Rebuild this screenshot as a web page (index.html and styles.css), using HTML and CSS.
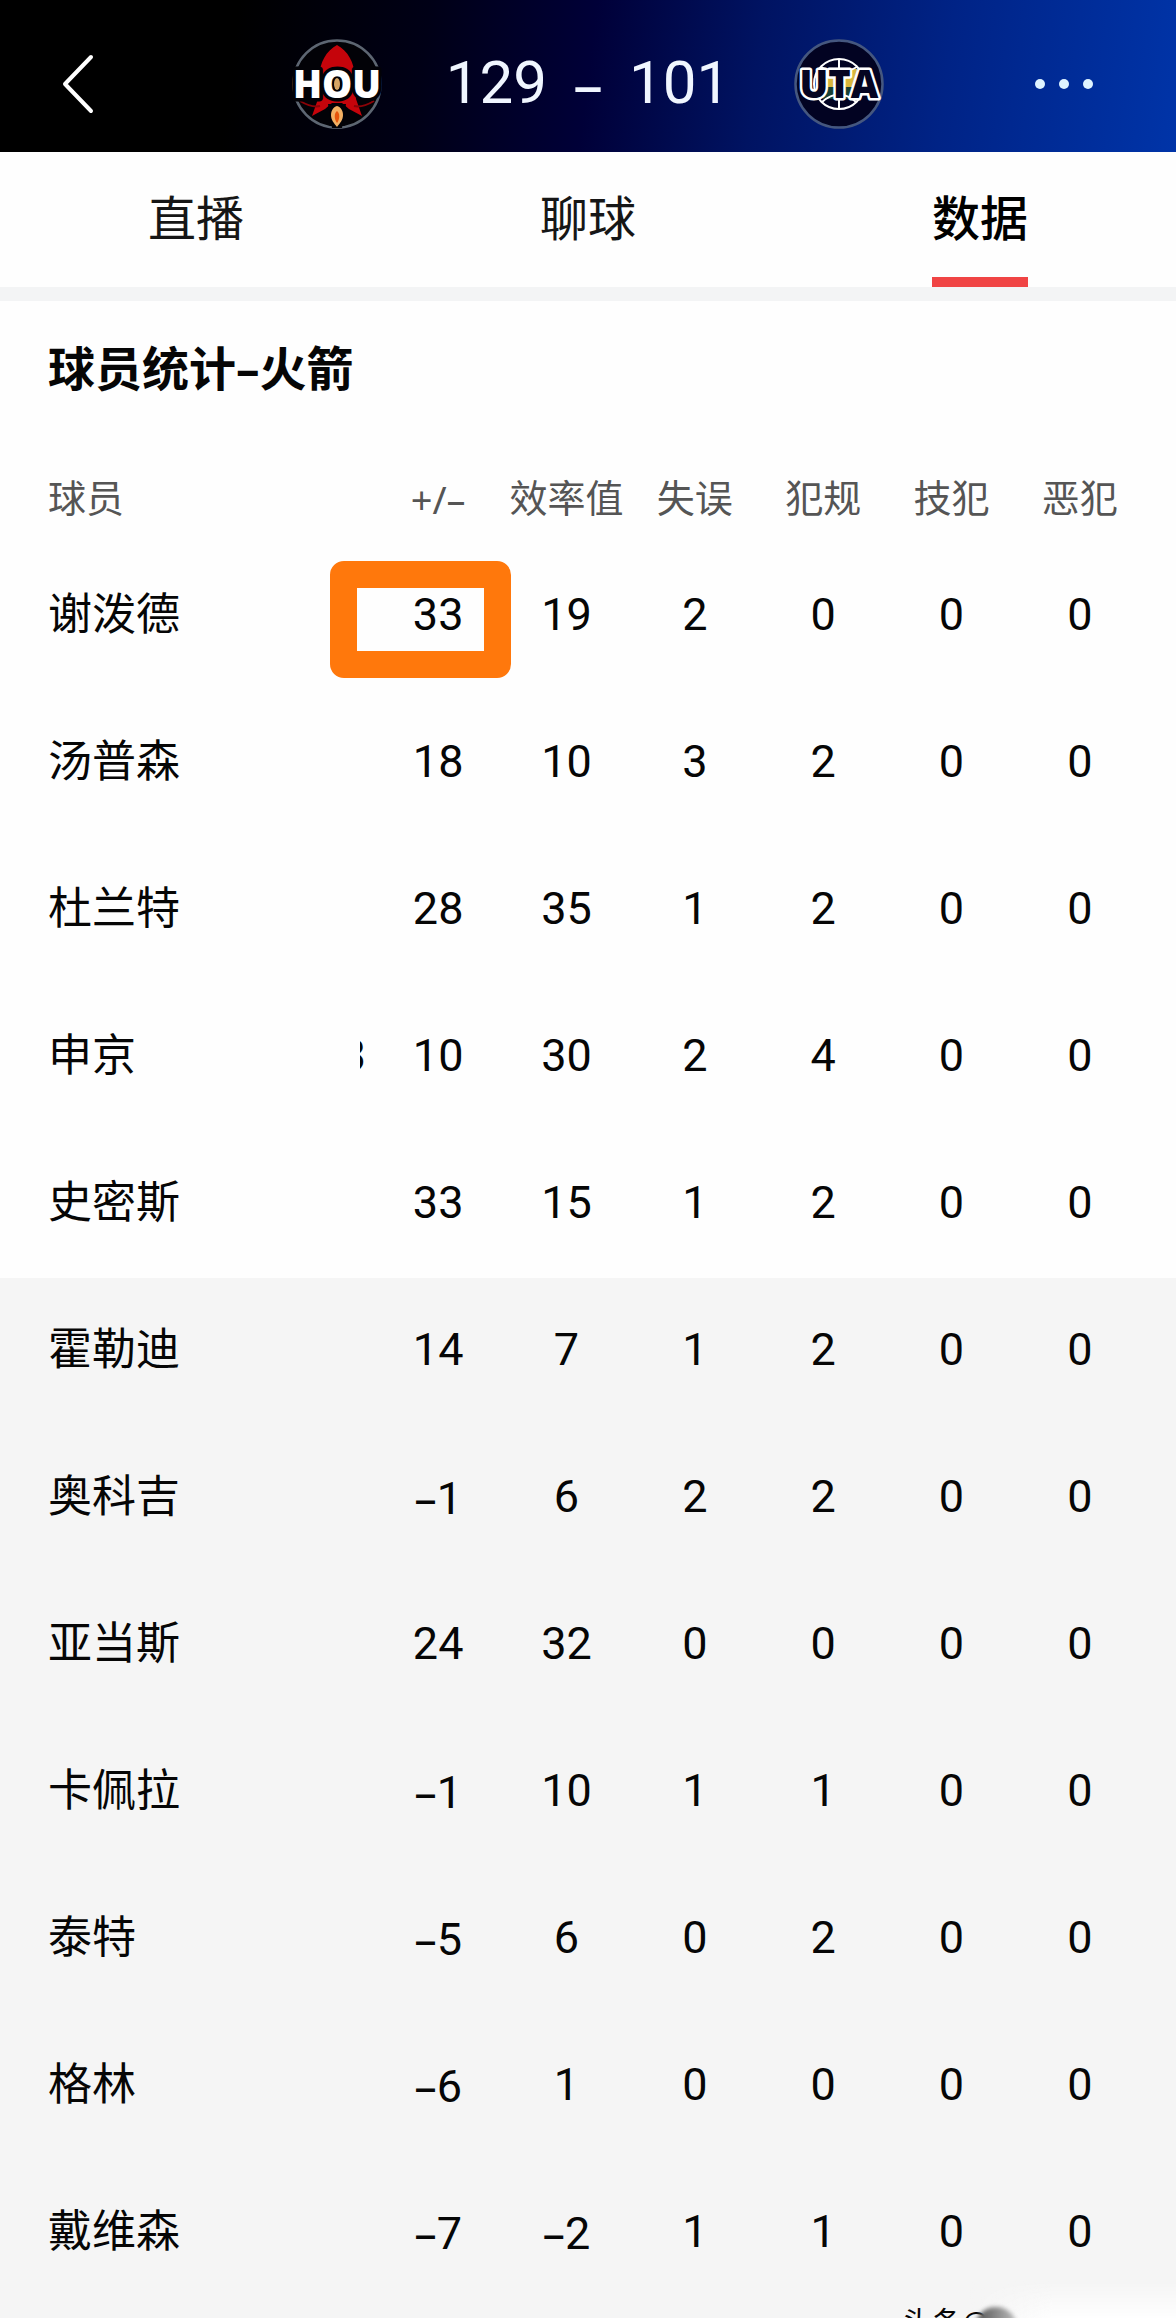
FILE: index.html
```html
<!DOCTYPE html>
<html lang="zh-CN">
<head>
<meta charset="utf-8">
<meta name="viewport" content="width=device-width, initial-scale=1">
<title>火箭 129 – 101 爵士</title>
<link rel="stylesheet" href="styles.css">
</head>
<body>
<header class="topbar">
  <button class="icon-button back" type="button" aria-label="返回">
    <svg width="32" height="60" viewBox="0 0 32 60" fill="none" stroke="#fff" stroke-width="4" stroke-linecap="round" stroke-linejoin="round"><path d="M29 3 3 30l26 27"/></svg>
  </button>
  <div class="match">
    <svg class="logo" width="90" height="92" viewBox="0 0 90 92" role="img" aria-label="HOU">
      <circle cx="45" cy="46" r="43.500" fill="#020207" stroke="#5d6672" stroke-width="2.500"/>
      <path d="M45 7C34 13 28 24 27 39l-1 22-6 17 13-7 7-6h10l7 6 13 7-6-17-1-22C62 24 56 13 45 7Z" fill="#c5040b"/>
      <path d="M8 63q12 7 20 5M82 63q-12 7-20 5" fill="none" stroke="#8a0308" stroke-width="2"/>
      <path d="M36 66h18l-4 24H40Z" fill="#020207"/>
      <path d="M45 68c4 1 6 5 6 9 0 5-3 8-6 12-3-4-6-7-6-12 0-4 2-8 6-9Z" fill="#f3b062"/>
      <path d="M45 73c3 2 3 8 0 12-3-4-3-10 0-12Z" fill="#e5560c"/>
      <text class="hou" x="45" y="60" text-anchor="middle">HOU</text>
      <ellipse cx="45" cy="46" rx="3" ry="6" fill="#d8a564"/>
    </svg>
    <div class="score"><span>129</span><span class="dash">–</span><span>101</span></div>
    <svg class="logo" width="90" height="92" viewBox="0 0 90 92" role="img" aria-label="UTA">
      <circle cx="45" cy="46" r="43.500" fill="#020322" stroke="#45577f" stroke-width="2.500"/>
      <path d="M29 31h34l3 18H25Z" fill="#d9b73e"/>
      <path d="M25 49h41l-5 12H29Z" fill="#173f34"/>
      <g fill="none" stroke="#fff" stroke-width="2"><circle cx="45" cy="46" r="25"/><path d="M45 21v50M27 29q18 10 36 0M28 64q17-15 34 0"/></g>
      <text class="uta" x="45" y="60" text-anchor="middle">UTA</text>
    </svg>
  </div>
  <button class="icon-button more" type="button" aria-label="更多">
    <svg width="60" height="12" viewBox="0 0 60 12" fill="#dff4ff"><circle cx="6" cy="6" r="5"/><circle cx="30" cy="6" r="5"/><circle cx="54" cy="6" r="5"/></svg>
  </button>
</header>
<nav class="tabs">
  <a class="tab" href="#live">直播</a>
  <a class="tab" href="#chat">聊球</a>
  <a class="tab active" href="#stats" aria-current="page">数据</a>
</nav>
<main id="stats">
  <h1 class="title">球员统计<span class="dash">–</span>火箭</h1>
  <table class="stats">
    <thead>
      <tr><th scope="col">球员</th><th scope="col" class="dash">+/–</th><th scope="col">效率值</th><th scope="col">失误</th><th scope="col">犯规</th><th scope="col">技犯</th><th scope="col">恶犯</th></tr>
    </thead>
    <tbody>
      <tr><th scope="row">谢泼德</th><td class="marked">33</td><td>19</td><td>2</td><td>0</td><td>0</td><td>0</td></tr>
      <tr><th scope="row">汤普森</th><td>18</td><td>10</td><td>3</td><td>2</td><td>0</td><td>0</td></tr>
      <tr><th scope="row">杜兰特</th><td>28</td><td>35</td><td>1</td><td>2</td><td>0</td><td>0</td></tr>
      <tr><th scope="row">申京<span class="cut">3</span></th><td>10</td><td>30</td><td>2</td><td>4</td><td>0</td><td>0</td></tr>
      <tr><th scope="row">史密斯</th><td>33</td><td>15</td><td>1</td><td>2</td><td>0</td><td>0</td></tr>
    </tbody>
    <tbody class="bench">
      <tr><th scope="row">霍勒迪</th><td>14</td><td>7</td><td>1</td><td>2</td><td>0</td><td>0</td></tr>
      <tr><th scope="row">奥科吉</th><td><span class="dash">–</span>1</td><td>6</td><td>2</td><td>2</td><td>0</td><td>0</td></tr>
      <tr><th scope="row">亚当斯</th><td>24</td><td>32</td><td>0</td><td>0</td><td>0</td><td>0</td></tr>
      <tr><th scope="row">卡佩拉</th><td><span class="dash">–</span>1</td><td>10</td><td>1</td><td>1</td><td>0</td><td>0</td></tr>
      <tr><th scope="row">泰特</th><td><span class="dash">–</span>5</td><td>6</td><td>0</td><td>2</td><td>0</td><td>0</td></tr>
      <tr><th scope="row">格林</th><td><span class="dash">–</span>6</td><td>1</td><td>0</td><td>0</td><td>0</td><td>0</td></tr>
      <tr><th scope="row">戴维森</th><td><span class="dash">–</span>7</td><td><span class="dash">–</span>2</td><td>1</td><td>1</td><td>0</td><td>0</td></tr>
    </tbody>
  </table>
</main>
<footer class="footer">
  <div class="watermark"><span class="glow"></span><span class="mark">头条@</span><span class="smudge"></span></div>
</footer>
</body>
</html>
```
FILE: styles.css
```css
* { box-sizing: border-box; }

body {
  margin: 0;
  background: #fefefe;
  color: #060606;
  font-family: Roboto, "Noto Sans CJK SC", sans-serif;
}

.dash { font-family: "Noto Sans", sans-serif; }

.topbar {
  display: grid;
  grid-template-columns: 1fr auto 1fr;
  align-items: center;
  height: 152px;
  padding: 16px 62px 0;
  background: linear-gradient(97deg, #000 0%, #000 20%, #000016 36%, #000038 50%, #001362 64%, #002386 80%, #0034a8 100%);
}

.icon-button {
  display: flex;
  padding: 0;
  border: 0;
  background: none;
  cursor: pointer;
}

.back { justify-self: start; }

.more {
  justify-self: end;
  margin-right: 20px;
}

.match {
  display: flex;
  align-items: center;
  gap: 64px;
}

.logo { overflow: visible; }

.hou, .uta {
  font-family: "Open Sans", sans-serif;
  font-size: 38px;
  font-weight: 800;
  paint-order: stroke;
  stroke-linejoin: round;
}

.hou {
  fill: #fff;
  stroke: #020207;
  stroke-width: 7px;
}

.uta {
  fill: #050522;
  stroke: #fff;
  stroke-width: 5px;
}

.score {
  display: flex;
  gap: 26px;
  padding-bottom: 2px;
  color: #f0f6ff;
  font-size: 60px;
  line-height: 80px;
}

.tabs {
  display: grid;
  grid-template-columns: repeat(3, 1fr);
  justify-items: center;
  height: 149px;
  border-bottom: 14px solid #f3f4f5;
}

.tab {
  padding-top: 10px;
  border-bottom: 10px solid transparent;
  color: #161616;
  font-size: 48px;
  line-height: 115px;
  text-decoration: none;
}

.active {
  border-color: #f04444;
  color: #000;
  font-weight: 500;
}

.title {
  margin: 0;
  padding: 32px 48px 52px;
  font-size: 47px;
  font-weight: 700;
  line-height: 70px;
}

.stats, .stats thead, .stats tbody { display: block; }

.stats tr {
  display: grid;
  grid-template-columns: 374px repeat(6, 1fr);
  height: 147px;
  padding-right: 32px;
  font-size: 45px;
  line-height: 143px;
}

.stats thead tr {
  height: 86px;
  color: #555;
  font-size: 38px;
  line-height: 84px;
}

.stats th, .stats td {
  padding: 0;
  font-weight: 400;
  text-align: center;
  white-space: nowrap;
}

.stats th:first-child {
  display: flex;
  justify-content: space-between;
  padding: 0 8px 0 48px;
  text-align: left;
}

.stats tbody th {
  font-size: 44px;
  line-height: 145px;
}

.bench { background: #f5f5f5; }

/* Tail of the column scrolled under the player names */
.cut {
  display: flex;
  justify-content: flex-end;
  width: 6px;
  overflow: hidden;
}

.marked { position: relative; }

.marked::after {
  content: "";
  position: absolute;
  inset: 18px -9px 12px -44px;
  border: 27px solid #ff780c;
  border-radius: 14px;
}

.footer {
  position: relative;
  height: 13px;
  background: #f5f5f5;
}

.watermark {
  position: absolute;
  right: 0;
  bottom: 0;
  width: 274px;
  height: 40px;
  overflow: hidden;
}

.glow {
  position: absolute;
  inset: 0 0 0 68px;
  background: linear-gradient(90deg, #f5f5f500, #fefefe 40%);
  mask-image: linear-gradient(transparent, #000);
}

.mark {
  position: absolute;
  top: 25px;
  left: 0;
  font-size: 30px;
  line-height: 36px;
}

.smudge {
  position: absolute;
  top: 27px;
  left: 74px;
  width: 40px;
  height: 36px;
  border-radius: 50%;
  background: linear-gradient(90deg, #555, #bbb);
  filter: blur(2px);
}
```
